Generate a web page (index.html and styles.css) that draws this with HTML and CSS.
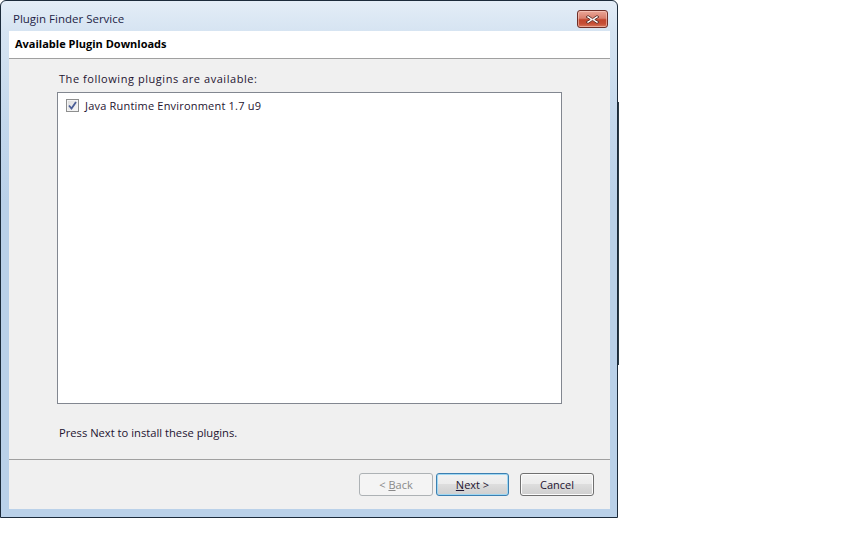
FILE: index.html
```html
<!DOCTYPE html>
<html>
<head>
<meta charset="utf-8">
<title>Plugin Finder Service</title>
<link rel="stylesheet" href="styles.css">
</head>
<body>
<div class="desktop">
  <div class="window">
    <div class="titlebar">
      <span class="title">Plugin Finder Service</span>
      <button class="close" aria-label="Close">
        <svg width="17" height="11" viewBox="0 0 17 11">
          <path d="M4 1.5 L8.5 4.6 L13 1.5 L15 3 L10.8 5.5 L15 8 L13 9.5 L8.5 6.4 L4 9.5 L2 8 L6.2 5.5 L2 3 Z" fill="#fff" stroke="#5a2a24" stroke-width="0.9" stroke-linejoin="round"/>
        </svg>
      </button>
    </div>
    <div class="client">
      <div class="header">Available Plugin Downloads</div>
      <div class="content">
        <div class="label">The following plugins are available:</div>
        <div class="listbox">
          <div class="item">
            <span class="checkbox">
              <svg width="9" height="9" viewBox="0 0 9 9"><path d="M1 4.5 L3.5 7.5 L8 1" fill="none" stroke="#4a5d96" stroke-width="1.8"/></svg>
            </span>
            <span class="item-text">Java Runtime Environment 1.7 u9</span>
          </div>
        </div>
        <div class="hint">Press Next to install these plugins.</div>
      </div>
      <div class="footer">
        <button class="btn disabled">&lt; <u>B</u>ack</button>
        <button class="btn default"><u>N</u>ext &gt;</button>
        <button class="btn cancel">Cancel</button>
      </div>
    </div>
  </div>
  <div class="behind"></div>
</div>
</body>
</html>
```
FILE: styles.css
```css
html, body {
  margin: 0;
  padding: 0;
  background: #ffffff;
}
body {
  width: 864px;
  height: 540px;
  overflow: hidden;
  font-family: "Open Sans", "Noto Sans", sans-serif;
  font-size: 11px;
  color: #1e1430;
}
.desktop {
  display: flex;
  align-items: flex-start;
}
.window {
  border: 1px solid #1c2b3b;
  border-radius: 6px 6px 0 0;
  background: linear-gradient(to bottom, #e4edf7 0px, #d6e4f2 30px, #c4d8ec 120px, #bad1e9 200px, #bad1e9 100%);
  display: flex;
  flex-direction: column;
  padding: 0 7px 8px 8px;
  box-sizing: content-box;
  width: 601px;
  height: 508px;
}
.titlebar {
  height: 30px;
  display: flex;
  align-items: flex-start;
  justify-content: space-between;
}
.title {
  margin-top: 10px;
  margin-left: 4px;
  font-size: 11.5px;
  color: #1e1e46;
}
.close {
  margin-top: 9px;
  margin-right: 2px;
  width: 31px;
  height: 18px;
  padding: 0;
  border: 1px solid #6e2f28;
  border-radius: 3px;
  background: linear-gradient(to bottom, #eaa697 0%, #d9806e 45%, #c2462e 55%, #c64f36 80%, #d9785e 100%);
  box-shadow: inset 0 0 0 1px rgba(255,220,210,0.5);
  display: flex;
  align-items: center;
  justify-content: center;
}
.client {
  height: 478px;
  background: #f0f0f0;
  display: flex;
  flex-direction: column;
}
.header {
  height: 27px;
  background: #ffffff;
  border-bottom: 1px solid #a0a0a0;
  font-weight: bold;
  font-size: 11px;
  color: #000;
  padding-left: 6px;
  line-height: 26px;
  box-sizing: content-box;
}
.content {
  flex: 1;
  padding-left: 48px;
  display: flex;
  flex-direction: column;
  border-bottom: 1px solid #a0a0a0;
}
.label {
  margin-top: 12px;
  margin-left: 2px;
  height: 21px;
  line-height: 16px;
  font-size: 11px;
  letter-spacing: 0.55px;
}
.listbox {
  width: 503px;
  height: 310px;
  background: #ffffff;
  border: 1px solid #828790;
}
.item {
  display: flex;
  align-items: center;
  margin-top: 5px;
  margin-left: 8px;
  gap: 6px;
  height: 14px;
  color: #1e1430;
}
.item-text {
  font-size: 11px;
  letter-spacing: 0.2px;
}
.checkbox {
  width: 11px;
  height: 11px;
  border: 1px solid #8e8f8f;
  background: linear-gradient(135deg, #dcdcdc, #f8f8f8);
  box-shadow: inset 0 0 0 1px #f4f4f4;
  display: flex;
  align-items: center;
  justify-content: center;
}
.hint {
  margin-top: 21px;
  margin-left: 2px;
  line-height: 16px;
  font-size: 11.2px;
}
.footer {
  height: 49px;
  display: flex;
  justify-content: flex-end;
  align-items: flex-start;
  padding-right: 16px;
  box-sizing: border-box;
}
.btn {
  margin-top: 13px;
  width: 74px;
  height: 23px;
  padding: 0;
  font-family: "Open Sans", "Noto Sans", sans-serif;
  font-size: 11px;
  color: #1e1430;
  border: 1px solid #707070;
  border-radius: 3px;
  background: linear-gradient(to bottom, #f2f2f2 0%, #ebebeb 50%, #dddddd 50%, #cfcfcf 100%);
  box-shadow: inset 0 0 0 1px #fcfcfc;
}
.btn.disabled {
  color: #8a8a8a;
  border-color: #adb2b5;
  background: #f4f4f4;
  box-shadow: none;
}
.btn.default {
  margin-left: 3px;
  width: 73px;
  border-color: #3c7fb1;
  box-shadow: inset 0 0 0 1px #9fd7f2;
}
.btn.cancel {
  margin-left: 11px;
}
.behind {
  margin-top: 102px;
  width: 1px;
  height: 263px;
  background: #2a3a44;
}
```
